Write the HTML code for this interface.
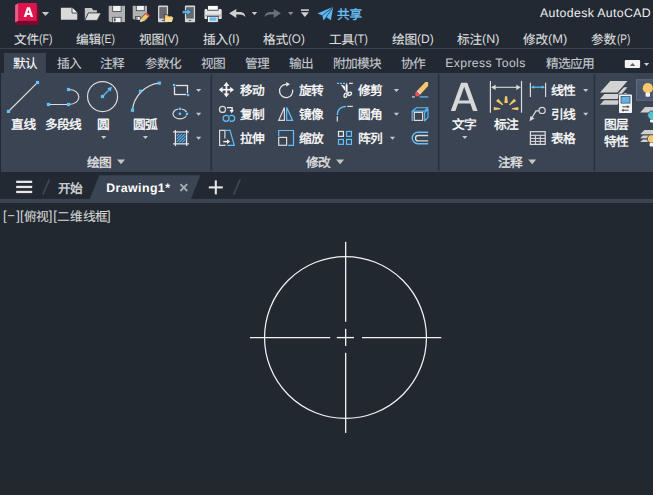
<!DOCTYPE html>
<html lang="zh-CN">
<head>
<meta charset="utf-8">
<title>Autodesk AutoCAD - Drawing1</title>
<style>
html,body{margin:0;padding:0;background:#212830;}
body{width:653px;height:495px;overflow:hidden;position:relative;font-family:"Liberation Sans",sans-serif;text-rendering:geometricPrecision;-webkit-font-smoothing:antialiased;}
#app{position:absolute;left:0;top:0;width:653px;height:495px;overflow:hidden;background:#212830;}
.abs{position:absolute;left:0;top:0;overflow:visible;}
#title,#menu,#tabs,#ftabs,#view{position:absolute;left:0;top:0;width:653px;height:0;}
#topbg{position:absolute;left:0;top:0;width:653px;height:199px;background:#222933;}
#sepline{position:absolute;left:0;top:47.5px;width:653px;height:1.3px;background:#3a4251;}
#activetab{position:absolute;left:4px;top:52.8px;width:42px;height:21px;background:#3b4453;}
#ribbon{position:absolute;left:1px;top:73px;width:652px;height:98.6px;background:#3b4453;}
.lbl{position:absolute;display:flex;align-items:baseline;white-space:nowrap;line-height:1;color:#e6e6e6;font-size:12px;}
.lbl svg,.vl svg{display:block;overflow:visible;fill:currentColor;stroke:currentColor;stroke-width:28;stroke-linejoin:round;flex:none;}
.lbl span{display:block;}
.apptitle{position:absolute;left:540.0px;top:6.0px;font-size:12.3px;line-height:15px;color:#f0f0f0;white-space:nowrap;letter-spacing:0.36px;}
.mi span{margin-left:0.4px;}
.xt{font-size:12.2px;letter-spacing:0.36px;}
.dw{font-size:12.3px;font-weight:bold;letter-spacing:0.45px;}
.vl{position:absolute;height:14px;width:120px;line-height:1;}
.vl span{position:absolute;top:0;display:block;}
.vl .b{font-size:13px;line-height:14px;top:-0.6px;}
.vl .c{top:0.3px;}
.vl svg{display:block;overflow:visible;fill:currentColor;stroke-width:8;}
.mi svg{stroke-width:10;}
.tab svg{stroke-width:8;}
svg.cjk text{font-family:"Liberation Sans","Noto Sans CJK SC",sans-serif;font-size:1000px;}
</style>
</head>
<body>
<div id="app">
<div id="topbg"></div>
<div id="title">
<svg class="abs" width="653" height="28" viewBox="0 0 653 28"><polygon points="15.1,5.1 18.6,3 18.6,20.9 15.1,22.6" fill="#ec5a88"/><polygon points="15.1,22.6 18.6,20.9 36.8,20.9 36.8,6.8 38.9,6.8 38.9,24.9 17.3,24.9" fill="#780a2c"/><rect x="18.6" y="3" width="18.2" height="17.9" fill="#e0134f"/><path d="M23.7 16.9 L27.0 7.3 H29.9 L33.2 16.9 H30.6 L30.0 14.9 H26.9 L26.3 16.9 Z M27.45 12.9 H29.45 L28.45 9.6 Z" fill="#fff" fill-rule="evenodd"/><polygon points="41.9,12 49.1,12 45.5,16.1" fill="#c8c8c8"/><polygon points="60.9,7.7 72.2,7.7 77.3,12.8 77.3,19.8 60.9,19.8" fill="#d9d9d9"/><polygon points="72.2,7.7 77.3,12.8 72.2,12.8" fill="#f6f6f6"/><path d="M72.0 7.7 V13.0 H77.3" stroke="#222933" stroke-width="0.8" fill="none"/><polygon points="84.8,8.0 91.7,8.0 93.3,10.3 96.9,10.3 96.9,13 88.3,13 84.8,20.4" fill="#c6c6c6"/><polygon points="88.4,12.9 101.1,12.9 97.2,20.4 84.8,20.4" fill="#dedede" stroke="#222933" stroke-width="0.8"/><path d="M108.7 5.6 H125 V22.3 H110.2 L108.7 20.8 Z" fill="#b2b2b2"/><rect x="112.7" y="5.2" width="8.4" height="6.3" fill="#f2f2f2" stroke="#3a4049" stroke-width="0.8"/><rect x="112.7" y="17.3" width="8.4" height="5.6" fill="#f2f2f2" stroke="#3a4049" stroke-width="0.8"/><rect x="108" y="22.35" width="18" height="1.2" fill="#222933"/><rect x="108" y="4" width="18" height="1.65" fill="#222933"/><rect x="113.8" y="18.3" width="1.9" height="3" fill="#555"/><path d="M132.7 5.6 H147 V19.8 H134.2 L132.7 18.3 Z" fill="#b2b2b2"/><rect x="136.3" y="5.2" width="8" height="5.5" fill="#f2f2f2" stroke="#3a4049" stroke-width="0.8"/><rect x="135.5" y="16.6" width="4.8" height="3.8" fill="#f2f2f2" stroke="#3a4049" stroke-width="0.8"/><rect x="132" y="19.85" width="9" height="1.4" fill="#222933"/><rect x="132" y="4" width="16" height="1.65" fill="#222933"/><rect x="136.3" y="17.4" width="1.3" height="2.4" fill="#555"/><polygon points="139.9,21.9 140.9,18.3 145.9,13.3 149.1,16.5 144.1,21.5" fill="#f6c86b" stroke="#222933" stroke-width="0.7"/><polygon points="145.3,13.9 146.7,12.5 149.9,15.7 148.5,17.1" fill="#e8505b"/><polygon points="139.9,21.9 140.7,19.0 142.9,21.2" fill="#eee"/><rect x="158" y="5.5" width="10.1" height="16.8" rx="1" fill="#d4d4d4"/><rect x="159.3" y="7.1" width="7.5" height="11.5" fill="#666a70"/><rect x="161.8" y="20" width="2.6" height="0.9" fill="#555"/><polygon points="164.4,14.7 167.6,14.7 168.4,16 172.4,16 172.4,17 173.3,17 171.8,22 164.4,22" fill="#f6c86b" stroke="#222933" stroke-width="0.7"/><polygon points="165.8,17.4 173.3,17.4 171.8,22 164.4,22" fill="#fbdc94"/><rect x="184.9" y="5.5" width="10.2" height="16.8" rx="1" fill="#d4d4d4"/><rect x="186.2" y="7.1" width="7.6" height="11.5" fill="#666a70"/><rect x="188.7" y="20" width="2.6" height="0.9" fill="#555"/><polygon points="182.3,10.7 187.0,10.7 187.0,8.7 191.7,12.05 187.0,15.4 187.0,13.4 182.3,13.4" fill="#5bb8f5" stroke="#222933" stroke-width="0.5"/><rect x="204.5" y="8.9" width="17.2" height="10.2" rx="1.2" fill="#e6e6e6"/><rect x="207.6" y="5.5" width="10.6" height="4.7" fill="#fafafa" stroke="#222933" stroke-width="0.8"/><rect x="204.5" y="14.6" width="17.2" height="1.9" fill="#b5b5b5"/><rect x="207.6" y="16.3" width="10.6" height="6" fill="#fafafa" stroke="#222933" stroke-width="0.8"/><rect x="209.4" y="17.3" width="7.2" height="3.6" fill="#6bbcf0"/><path transform="translate(229.1,8.7)" d="M0 4.6 L7.2 0.3 V3.2 H10.4 C14.4 3.2 16.4 5.3 16.2 8.6 C15.2 6.8 13.4 5.9 10.4 5.9 H7.2 V9.2 Z" fill="#d0d0d0"/><polygon points="251.8,12 257.2,12 254.5,15.2" fill="#c8c8c8"/><path transform="translate(280.9,8.7) scale(-1,1)" d="M0 4.6 L7.2 0.3 V3.2 H10.4 C14.4 3.2 16.4 5.3 16.2 8.6 C15.2 6.8 13.4 5.9 10.4 5.9 H7.2 V9.2 Z" fill="#6a707a"/><polygon points="287.95,12 293.35,12 290.65,15.2" fill="#8b8f96"/><rect x="300.9" y="9.3" width="8" height="1.6" fill="#d0d0d0"/><polygon points="300.9,12.3 308.9,12.3 304.9,17" fill="#d0d0d0"/><path d="M333.2 6.8 L317.4 13.5 L322.4 15.5 L323.4 20.5 L326.3 17.1 L330.9 20.3 Z" fill="#5bb8f5"/><path d="M333.2 6.8 L322.4 15.5 M333.2 6.8 L326.3 17.1" stroke="#222933" stroke-width="0.7" fill="none"/></svg>
<div class="lbl " style="left:337.3px;top:8.3px;color:#6cc0f5;"><svg class="cjk" role="img" aria-label="共享" width="24.80" height="10.91" viewBox="0 -880 2000 880"><text x="0 1000" y="0">共享</text></svg></div>
<div class="apptitle">Autodesk AutoCAD</div>
</div>
<div id="menu">
<div class="lbl mi" style="left:13.7px;top:32.5px;color:#dedede;"><svg class="cjk" role="img" aria-label="文件" width="24.80" height="10.91" viewBox="0 -880 2000 880"><text x="0 1000" y="0">文件</text></svg><span style="font-size:12.4px;transform:scaleX(0.852);transform-origin:0 50%;">(F)</span></div>
<div class="lbl mi" style="left:75.9px;top:32.5px;color:#dedede;"><svg class="cjk" role="img" aria-label="编辑" width="24.80" height="10.91" viewBox="0 -880 2000 880"><text x="0 1000" y="0">编辑</text></svg><span style="font-size:12.4px;transform:scaleX(0.847);transform-origin:0 50%;">(E)</span></div>
<div class="lbl mi" style="left:138.6px;top:32.5px;color:#dedede;"><svg class="cjk" role="img" aria-label="视图" width="24.80" height="10.91" viewBox="0 -880 2000 880"><text x="0 1000" y="0">视图</text></svg><span style="font-size:12.4px;transform:scaleX(0.889);transform-origin:0 50%;">(V)</span></div>
<div class="lbl mi" style="left:202.5px;top:32.5px;color:#dedede;"><svg class="cjk" role="img" aria-label="插入" width="24.80" height="10.91" viewBox="0 -880 2000 880"><text x="0 1000" y="0">插入</text></svg><span style="font-size:12.4px;transform:scaleX(0.999);transform-origin:0 50%;">(I)</span></div>
<div class="lbl mi" style="left:263.1px;top:32.5px;color:#dedede;"><svg class="cjk" role="img" aria-label="格式" width="24.80" height="10.91" viewBox="0 -880 2000 880"><text x="0 1000" y="0">格式</text></svg><span style="font-size:12.4px;transform:scaleX(0.938);transform-origin:0 50%;">(O)</span></div>
<div class="lbl mi" style="left:329px;top:32.5px;color:#dedede;"><svg class="cjk" role="img" aria-label="工具" width="24.80" height="10.91" viewBox="0 -880 2000 880"><text x="0 1000" y="0">工具</text></svg><span style="font-size:12.4px;transform:scaleX(0.877);transform-origin:0 50%;">(T)</span></div>
<div class="lbl mi" style="left:391.5px;top:32.5px;color:#dedede;"><svg class="cjk" role="img" aria-label="绘图" width="24.80" height="10.91" viewBox="0 -880 2000 880"><text x="0 1000" y="0">绘图</text></svg><span style="font-size:12.4px;transform:scaleX(0.969);transform-origin:0 50%;">(D)</span></div>
<div class="lbl mi" style="left:456.5px;top:32.5px;color:#dedede;"><svg class="cjk" role="img" aria-label="标注" width="24.80" height="10.91" viewBox="0 -880 2000 880"><text x="0 1000" y="0">标注</text></svg><span style="font-size:12.4px;transform:scaleX(1.01);transform-origin:0 50%;">(N)</span></div>
<div class="lbl mi" style="left:523px;top:32.5px;color:#dedede;"><svg class="cjk" role="img" aria-label="修改" width="24.80" height="10.91" viewBox="0 -880 2000 880"><text x="0 1000" y="0">修改</text></svg><span style="font-size:12.4px;transform:scaleX(1.038);transform-origin:0 50%;">(M)</span></div>
<div class="lbl mi" style="left:591.4px;top:32.5px;color:#dedede;"><svg class="cjk" role="img" aria-label="参数" width="24.80" height="10.91" viewBox="0 -880 2000 880"><text x="0 1000" y="0">参数</text></svg><span style="font-size:12.4px;transform:scaleX(0.81);transform-origin:0 50%;">(P)</span></div>
</div>
<div id="sepline"></div>
<div id="tabs">
<div id="activetab"></div>
<div class="lbl tab" style="left:12.9px;top:57.1px;color:#ffffff;"><svg class="cjk" role="img" aria-label="默认" width="24.40" height="10.91" viewBox="0 -880 1967.7 880"><text x="0 967.7" y="0">默认</text></svg></div>
<div class="lbl tab" style="left:56.5px;top:57.1px;color:#c6cad0;"><svg class="cjk" role="img" aria-label="插入" width="24.40" height="10.91" viewBox="0 -880 1967.7 880"><text x="0 967.7" y="0">插入</text></svg></div>
<div class="lbl tab" style="left:100.3px;top:57.1px;color:#c6cad0;"><svg class="cjk" role="img" aria-label="注释" width="24.40" height="10.91" viewBox="0 -880 1967.7 880"><text x="0 967.7" y="0">注释</text></svg></div>
<div class="lbl tab" style="left:145.4px;top:57.1px;color:#c6cad0;"><svg class="cjk" role="img" aria-label="参数化" width="36.40" height="10.91" viewBox="0 -880 2935.5 880"><text x="0 967.7 1935.5" y="0">参数化</text></svg></div>
<div class="lbl tab" style="left:200.7px;top:57.1px;color:#c6cad0;"><svg class="cjk" role="img" aria-label="视图" width="24.40" height="10.91" viewBox="0 -880 1967.7 880"><text x="0 967.7" y="0">视图</text></svg></div>
<div class="lbl tab" style="left:244.8px;top:57.1px;color:#c6cad0;"><svg class="cjk" role="img" aria-label="管理" width="24.40" height="10.91" viewBox="0 -880 1967.7 880"><text x="0 967.7" y="0">管理</text></svg></div>
<div class="lbl tab" style="left:288.6px;top:57.1px;color:#c6cad0;"><svg class="cjk" role="img" aria-label="输出" width="24.40" height="10.91" viewBox="0 -880 1967.7 880"><text x="0 967.7" y="0">输出</text></svg></div>
<div class="lbl tab" style="left:333.1px;top:57.1px;color:#c6cad0;"><svg class="cjk" role="img" aria-label="附加模块" width="48.40" height="10.91" viewBox="0 -880 3903.2 880"><text x="0 967.7 1935.5 2903.2" y="0">附加模块</text></svg></div>
<div class="lbl tab" style="left:400.7px;top:57.1px;color:#c6cad0;"><svg class="cjk" role="img" aria-label="协作" width="24.40" height="10.91" viewBox="0 -880 1967.7 880"><text x="0 967.7" y="0">协作</text></svg></div>
<div class="lbl tab" style="left:545.6px;top:57.1px;color:#c6cad0;"><svg class="cjk" role="img" aria-label="精选应用" width="48.40" height="10.91" viewBox="0 -880 3903.2 880"><text x="0 967.7 1935.5 2903.2" y="0">精选应用</text></svg></div>
<div class="lbl tab" style="left:445.3px;top:57.2px;color:#c6cad0"><span class="xt">Express Tools</span></div>
<svg class="abs" style="left:620px;top:56px" width="33" height="16" viewBox="620 56 33 16"><rect x="624.8" y="60.1" width="15.3" height="7.8" rx="0.8" fill="#f2f2f2"/><polygon points="629.9,66.0 635.3,66.0 632.6,62.9" fill="#5c5c5c"/><polygon points="644,63 649.2,63 646.6,66" fill="#d0d0d0"/></svg>
</div>
<div id="ribbon"></div>
<svg class="abs" style="left:0;top:73px" width="653" height="99" viewBox="0 73 653 99"><rect x="210.55" y="74.5" width="1.5" height="96.5" fill="#2a303b"/><rect x="437.95" y="74.5" width="1.5" height="96.5" fill="#2a303b"/><rect x="593.65" y="74.5" width="1.5" height="96.5" fill="#2a303b"/><line x1="9.6" y1="110.3" x2="36.4" y2="83.6" stroke="#dadada" stroke-width="1.2" /><rect x="6.9" y="109.8" width="3.2" height="3.2" fill="#5fc0fb"/><rect x="35.9" y="80.9" width="3.2" height="3.2" fill="#5fc0fb"/><path d="M48.5 104.5 H68.5 M68.5 89.5 C82.3 89.5 82.3 104.5 68.5 104.5" stroke="#dadada" stroke-width="1.2" fill="none" /><rect x="46.9" y="102.9" width="3.2" height="3.2" fill="#5fc0fb"/><rect x="66.9" y="102.9" width="3.2" height="3.2" fill="#5fc0fb"/><rect x="66.9" y="87.9" width="3.2" height="3.2" fill="#5fc0fb"/><circle cx="102.55" cy="96.55" r="15.0" stroke="#dadada" stroke-width="1.2" fill="none"/><line x1="103.5" y1="95.5" x2="110" y2="88.9" stroke="#5fc0fb" stroke-width="1.15" /><polygon points="112.0,86.8 107.2,88.3 108.9,89.8 110.6,91.7" fill="#5fc0fb"/><rect x="100.9" y="94.9" width="3.2" height="3.2" fill="#5fc0fb"/><path d="M132.5 110.2 C133.5 96 146 84.2 159.3 83.1" stroke="#dadada" stroke-width="1.2" fill="none" /><rect x="130.9" y="108.6" width="3.2" height="3.2" fill="#5fc0fb"/><rect x="138.9" y="89.7" width="3.2" height="3.2" fill="#5fc0fb"/><rect x="157.7" y="81.5" width="3.2" height="3.2" fill="#5fc0fb"/><polygon points="101.1,135.9 106.3,135.9 103.7,138.9" fill="#c6c6c6"/><polygon points="142.8,135.9 148,135.9 145.4,138.9" fill="#c6c6c6"/><rect x="174.5" y="85.5" width="13" height="9" stroke="#e4e4e4" stroke-width="1.3" fill="none"/><rect x="172.25" y="83.25" width="3.6" height="3.6" fill="#333c4a"/><rect x="172.8" y="83.8" width="2.5" height="2.5" fill="#5fc0fb"/><rect x="186.2" y="93.2" width="3.6" height="3.6" fill="#333c4a"/><rect x="186.75" y="93.75" width="2.5" height="2.5" fill="#5fc0fb"/><polygon points="196,89 201.2,89 198.6,92" fill="#c6c6c6"/><ellipse cx="179.95" cy="113.85" rx="6.95" ry="5.0" stroke="#dadada" stroke-width="1.2" fill="none"/><rect x="178.1" y="107.1" width="3.6" height="3.6" fill="#333c4a"/><rect x="178.65" y="107.65" width="2.5" height="2.5" fill="#5fc0fb"/><rect x="178.1" y="112" width="3.6" height="3.6" fill="#333c4a"/><rect x="178.65" y="112.55" width="2.5" height="2.5" fill="#5fc0fb"/><rect x="185.2" y="112" width="3.6" height="3.6" fill="#333c4a"/><rect x="185.75" y="112.55" width="2.5" height="2.5" fill="#5fc0fb"/><polygon points="196,112.7 201.2,112.7 198.6,115.7" fill="#c6c6c6"/><clipPath id="hc"><rect x="176.8" y="133.7" width="8.9" height="8.7"/></clipPath><rect x="176.8" y="133.7" width="8.9" height="8.7" fill="#2c394c"/><g clip-path="url(#hc)" stroke="#5cb4f4" stroke-width="1.25"><line x1="166.3" y1="143.5" x2="177.3" y2="132.5"/><line x1="169.3" y1="143.5" x2="180.3" y2="132.5"/><line x1="172.3" y1="143.5" x2="183.3" y2="132.5"/><line x1="175.3" y1="143.5" x2="186.3" y2="132.5"/><line x1="178.3" y1="143.5" x2="189.3" y2="132.5"/><line x1="181.3" y1="143.5" x2="192.3" y2="132.5"/><line x1="184.3" y1="143.5" x2="195.3" y2="132.5"/></g><line x1="175.45" y1="130" x2="175.45" y2="145.9" stroke="#e6e6e6" stroke-width="1.25" /><line x1="186.6" y1="130" x2="186.6" y2="145.9" stroke="#e6e6e6" stroke-width="1.25" /><line x1="173.1" y1="131.95" x2="188.9" y2="131.95" stroke="#e6e6e6" stroke-width="1.25" /><line x1="173.1" y1="143.85" x2="188.9" y2="143.85" stroke="#e6e6e6" stroke-width="1.25" /><polygon points="196,136.7 201.2,136.7 198.6,139.7" fill="#c6c6c6"/><polygon points="117,159.6 125,159.6 121,164.2" fill="#c6c6c6"/><polygon points="336.1,159.6 344.1,159.6 340.1,164.2" fill="#c6c6c6"/><polygon points="528.2,159.6 536.2,159.6 532.2,164.2" fill="#c6c6c6"/><line x1="221.4" y1="89.7" x2="231.4" y2="89.7" stroke="#f6f6f6" stroke-width="1.7" /><line x1="226.4" y1="84.7" x2="226.4" y2="94.7" stroke="#f6f6f6" stroke-width="1.7" /><polygon points="234,89.7 230.2,92.7 230.2,86.7" fill="#f6f6f6"/><polygon points="218.8,89.7 222.6,86.7 222.6,92.7" fill="#f6f6f6"/><polygon points="226.4,97.3 223.4,93.5 229.4,93.5" fill="#f6f6f6"/><polygon points="226.4,82.1 229.4,85.9 223.4,85.9" fill="#f6f6f6"/><circle cx="222.5" cy="109.45" r="3.05" stroke="#dadada" stroke-width="1.25" fill="none"/><path d="M227.0 107.6 H232.1 V110.6" stroke="#f2f2f2" stroke-width="1.4" fill="none" /><polygon points="229.5,110.1 233.9,110.1 231.7,113.2" fill="#f2f2f2"/><circle cx="231.7" cy="118.35" r="3.0" stroke="#5fc0fb" stroke-width="1.2" fill="none"/><circle cx="226.1" cy="118.35" r="3.0" stroke="#3b4453" stroke-width="2.6" fill="#3b4453"/><circle cx="226.1" cy="118.35" r="3.0" stroke="#5fc0fb" stroke-width="1.2" fill="none"/><path d="M224.9 138.6 V130.4 H219.6 V145.3 H224.9 V144.4" stroke="#dadada" stroke-width="1.2" fill="none" /><path d="M224.9 130.4 H230 L234.3 145.3 H227.3" stroke="#5fc0fb" stroke-width="1.2" fill="none" /><line x1="223.2" y1="141.6" x2="227.6" y2="141.6" stroke="#f0f0f0" stroke-width="1.4" /><polygon points="230.1,141.6 227,139.3 227,143.9" fill="#f0f0f0"/><path d="M286.3 84.4 A6.6 6.6 0 1 0 292.6 89.6" stroke="#e6e6e6" stroke-width="1.3" fill="none" /><polygon points="290.0,84.3 286.2,82.0 286.2,86.6" fill="#ececec"/><path d="M278.7 120.4 L284.4 107.6 V120.4 Z" stroke="#dadada" stroke-width="1.2" fill="none" /><path d="M286.7 120.4 V107.6 L292.6 120.4 Z" stroke="#5fc0fb" stroke-width="1.2" fill="none" /><path d="M278.7 136.0 V130.5 H293.5 V145.3 H288.3" stroke="#5fc0fb" stroke-width="1.2" fill="none" /><rect x="278.7" y="137.4" width="7.9" height="7.9" stroke="#dadada" stroke-width="1.2" fill="none"/><line x1="336.9" y1="83.4" x2="345.1" y2="83.4" stroke="#5fc0fb" stroke-width="1.3" stroke-dasharray="2.1 0.9"/><line x1="349" y1="83.4" x2="352.9" y2="83.4" stroke="#dadada" stroke-width="1.3" /><polygon points="340.6,84.6 344.2,85.7 348.9,92.2 347.0,93.6" fill="#f6f6f6"/><polygon points="346.3,82.3 347.9,85.2 347.9,91.9 345.5,92.5 345.4,85.2" fill="#f6f6f6" stroke="#3b4453" stroke-width="0.5"/><ellipse cx="345.5" cy="95.4" rx="1.45" ry="2.0" transform="rotate(18 345.5 95.4)" stroke="#f6f6f6" stroke-width="1.3" fill="none"/><ellipse cx="349.7" cy="93.8" rx="2.0" ry="1.5" transform="rotate(-28 349.7 93.8)" stroke="#f6f6f6" stroke-width="1.3" fill="none"/><path d="M337.3 114.9 C337.3 110 340.6 106.4 345.8 106.4" stroke="#5fc0fb" stroke-width="1.5" fill="none" /><line x1="347.3" y1="106.4" x2="352.9" y2="106.4" stroke="#dadada" stroke-width="1.25" /><line x1="337.3" y1="116.3" x2="337.3" y2="121.6" stroke="#dadada" stroke-width="1.25" /><rect x="338.5" y="131.45" width="4.9" height="4.9" stroke="#e6e6e6" stroke-width="1.2" fill="none"/><rect x="346.55" y="131.45" width="4.9" height="4.9" stroke="#5fc0fb" stroke-width="1.2" fill="none"/><rect x="338.5" y="139.45" width="4.9" height="4.9" stroke="#5fc0fb" stroke-width="1.2" fill="none"/><rect x="346.55" y="139.45" width="4.9" height="4.9" stroke="#5fc0fb" stroke-width="1.2" fill="none"/><polygon points="393.8,88.9 399,88.9 396.4,91.9" fill="#c6c6c6"/><polygon points="393.8,112.7 399,112.7 396.4,115.7" fill="#c6c6c6"/><polygon points="389.9,136.7 395.1,136.7 392.5,139.7" fill="#c6c6c6"/><polygon points="425.4,82.0 428.1,82.0 428.1,85.9 421.2,93.4 417.6,90.2" fill="#f6c86b"/><polygon points="417.6,90.2 421.2,93.4 420.2,94.5 416.6,91.3" fill="#f6f6f6"/><polygon points="416.6,91.3 420.2,94.5 419.0,96.0 416.6,96.5 415.1,95.3 415.3,92.8" fill="#e8505b"/><line x1="412" y1="96.9" x2="414.9" y2="96.9" stroke="#dadada" stroke-width="1.2" /><line x1="419.6" y1="96.9" x2="428.2" y2="96.9" stroke="#5fc0fb" stroke-width="1.2" /><rect x="414.3" y="112.4" width="8.3" height="8.0" stroke="#dadada" stroke-width="1.2" fill="none"/><polygon points="412.2,111.1 416.5,107.7 428,107.7 424.4,111.1" stroke="#5fc0fb" stroke-width="1.1" fill="none" stroke-linejoin="round"/><polygon points="424.7,112.6 428,109.3 428,117.3 424.7,120.9" stroke="#5fc0fb" stroke-width="1.1" fill="none" stroke-linejoin="round"/><line x1="412.2" y1="111.1" x2="412.2" y2="121" stroke="#5fc0fb" stroke-width="1.1" /><path d="M428.2 132.3 H418 A5.75 5.75 0 0 0 418 143.8 H428.2" stroke="#5fc0fb" stroke-width="1.4" fill="none" /><path d="M428.2 135.5 H418.2 A2.7 2.7 0 0 0 418.2 140.9 H428.2" stroke="#dadada" stroke-width="1.4" fill="none" /><path d="M450.8 111 L461.1 82.7 H467.3 L477.6 111 H473 L470.3 103.6 H458.1 L455.4 111 Z M459.3 100.4 H469.1 L464.2 86.8 Z" fill="#d8d8d8" fill-rule="evenodd"/><polygon points="462.2,135.9 467.4,135.9 464.8,138.9" fill="#c6c6c6"/><line x1="490.4" y1="80.9" x2="490.4" y2="112.7" stroke="#dadada" stroke-width="1.2" /><line x1="521.5" y1="80.9" x2="521.5" y2="112.7" stroke="#dadada" stroke-width="1.2" /><line x1="493" y1="87.3" x2="519" y2="87.3" stroke="#dadada" stroke-width="1.1" /><polygon points="491.0,87.3 495.6,84.7 495.6,89.9" fill="#dadada"/><polygon points="520.9,87.3 516.3,84.7 516.3,89.9" fill="#dadada"/><g fill="#f6c86b"><polygon points="505.0,96.3 507.2,96.3 507.8,103 504.4,103"/><polygon points="496.0,101.1 498.2,98.8 503.2,104.4 502.3,105.3"/><polygon points="516.2,101.1 514.0,98.8 509.0,104.4 509.9,105.3"/><polygon points="493.8,107.1 493.8,110.2 500.4,109.3 500.4,108.2"/><polygon points="518.4,107.1 518.4,110.2 511.8,109.3 511.8,108.2"/></g><line x1="530.4" y1="82.7" x2="530.4" y2="97" stroke="#dadada" stroke-width="1.2" /><line x1="545.6" y1="82.7" x2="545.6" y2="97" stroke="#dadada" stroke-width="1.2" /><line x1="532" y1="87.2" x2="544" y2="87.2" stroke="#5fc0fb" stroke-width="1.3" /><polygon points="531,87.2 534.2,85.6 534.2,88.8" fill="#5fc0fb"/><polygon points="545,87.2 541.8,85.6 541.8,88.8" fill="#5fc0fb"/><circle cx="542.1" cy="110.4" r="3.1" stroke="#dadada" stroke-width="1.2" fill="none"/><path d="M539 110.9 H536 L531.6 118.3" stroke="#dadada" stroke-width="1.2" fill="none" /><polygon points="529.6,121.2 530.4,115.9 534.5,118.4" fill="#dadada"/><rect x="530.4" y="131.7" width="14.8" height="12.7" stroke="#dadada" stroke-width="1.25" fill="none"/><line x1="530.4" y1="135.3" x2="545.2" y2="135.3" stroke="#dadada" stroke-width="1.15" /><line x1="530.4" y1="138.4" x2="545.2" y2="138.4" stroke="#dadada" stroke-width="1.05" /><line x1="530.4" y1="141.4" x2="545.2" y2="141.4" stroke="#dadada" stroke-width="1.05" /><line x1="535.4" y1="135.3" x2="535.4" y2="144.4" stroke="#dadada" stroke-width="1.05" /><line x1="540.3" y1="135.3" x2="540.3" y2="144.4" stroke="#dadada" stroke-width="1.05" /><polygon points="583.1,88.9 588.3,88.9 585.7,91.9" fill="#c6c6c6"/><polygon points="583.1,112.8 588.3,112.8 585.7,115.8" fill="#c6c6c6"/><polygon points="600,104.7 610.3,93.1 627.5,93.1 617.4,104.7" fill="#cdcdcd"/><polygon points="599.4,100.3 609.7,88.7 628.1,88.7 618,100.3" fill="#3b4453"/><polygon points="600,98.9 610.3,87.3 627.5,87.3 617.4,98.9" fill="#d3d3d3"/><polygon points="599.4,94 609.7,82.4 628.1,82.4 618,94" fill="#3b4453"/><polygon points="600,92.6 610.3,81 627.5,81 617.4,92.6" fill="#d3d3d3"/><rect x="618.3" y="93.8" width="14.4" height="19.9" rx="1" fill="#3b4453"/><rect x="619" y="94.5" width="13" height="18.5" rx="0.8" fill="#f2f2f2"/><rect x="621" y="96.4" width="9" height="6.7" fill="#5fb4f0" stroke="#444" stroke-width="0.7"/><line x1="622.4" y1="106.8" x2="628.4" y2="106.8" stroke="#444" stroke-width="1" /><line x1="622.6" y1="110.2" x2="628.6" y2="110.2" stroke="#444" stroke-width="1" /><polygon points="629.6,106.8 627.4,105.3 627.4,108.3" fill="#444"/><polygon points="621.4,110.2 623.6,108.7 623.6,111.7" fill="#444"/><rect x="636.6" y="79.8" width="20" height="20.4" fill="#4d586c" stroke="#65718a" stroke-width="0.9"/><circle cx="647.8" cy="88.2" r="5.1" fill="#f6c86b"/><rect x="645.6" y="92.6" width="4.4" height="4.2" rx="1" fill="#f4f4f4"/><polygon points="640.2,112.6 645,107.1 656,107.1 656,112.6" fill="#cfcfcf"/><circle cx="652" cy="115.3" r="4.3" fill="#4fc4cf" stroke="#3b4453" stroke-width="0.8"/><rect x="650" y="119.4" width="4" height="3" rx="0.8" fill="#f4f4f4"/><polygon points="640.2,134.2 644.4,129.9 656,129.9 656,134.2" fill="#cfcfcf"/><polygon points="640.2,138.2 642.8,135.6 656,135.6 656,138.2" fill="#cfcfcf"/><polygon points="640.2,142 642.8,139.6 656,139.6 656,142" fill="#cfcfcf"/><circle cx="651.6" cy="138.9" r="4.3" fill="#f6c86b" stroke="#3b4453" stroke-width="0.8"/><rect x="649.6" y="143" width="4" height="3.4" rx="0.8" fill="#f4f4f4"/></svg>
<div class="lbl rl" style="left:10.7px;top:118.2px;color:#ffffff;"><svg class="cjk" role="img" aria-label="直线" width="24.80" height="10.91" viewBox="0 -880 2000 880"><text x="0 1000" y="0">直线</text></svg></div>
<div class="lbl rl" style="left:45.2px;top:118.2px;color:#ffffff;"><svg class="cjk" role="img" aria-label="多段线" width="36.40" height="10.91" viewBox="0 -880 2935.5 880"><text x="0 967.7 1935.5" y="0">多段线</text></svg></div>
<div class="lbl rl" style="left:97.3px;top:118.2px;color:#ffffff;"><svg class="cjk" role="img" aria-label="圆" width="12.40" height="10.91" viewBox="0 -880 1000 880"><text x="0" y="0">圆</text></svg></div>
<div class="lbl rl" style="left:133.3px;top:118.2px;color:#ffffff;"><svg class="cjk" role="img" aria-label="圆弧" width="24.40" height="10.91" viewBox="0 -880 1967.7 880"><text x="0 967.7" y="0">圆弧</text></svg></div>
<div class="lbl rl" style="left:86.6px;top:156.4px;color:#e2e2e2;"><svg class="cjk" role="img" aria-label="绘图" width="24.40" height="10.91" viewBox="0 -880 1967.7 880"><text x="0 967.7" y="0">绘图</text></svg></div>
<div class="lbl rl" style="left:240px;top:84.2px;color:#ffffff;"><svg class="cjk" role="img" aria-label="移动" width="24.40" height="10.91" viewBox="0 -880 1967.7 880"><text x="0 967.7" y="0">移动</text></svg></div>
<div class="lbl rl" style="left:240px;top:108.2px;color:#ffffff;"><svg class="cjk" role="img" aria-label="复制" width="24.40" height="10.91" viewBox="0 -880 1967.7 880"><text x="0 967.7" y="0">复制</text></svg></div>
<div class="lbl rl" style="left:240px;top:132.2px;color:#ffffff;"><svg class="cjk" role="img" aria-label="拉伸" width="24.40" height="10.91" viewBox="0 -880 1967.7 880"><text x="0 967.7" y="0">拉伸</text></svg></div>
<div class="lbl rl" style="left:298.8px;top:84.2px;color:#ffffff;"><svg class="cjk" role="img" aria-label="旋转" width="24.40" height="10.91" viewBox="0 -880 1967.7 880"><text x="0 967.7" y="0">旋转</text></svg></div>
<div class="lbl rl" style="left:298.8px;top:108.2px;color:#ffffff;"><svg class="cjk" role="img" aria-label="镜像" width="24.40" height="10.91" viewBox="0 -880 1967.7 880"><text x="0 967.7" y="0">镜像</text></svg></div>
<div class="lbl rl" style="left:298.8px;top:132.2px;color:#ffffff;"><svg class="cjk" role="img" aria-label="缩放" width="24.40" height="10.91" viewBox="0 -880 1967.7 880"><text x="0 967.7" y="0">缩放</text></svg></div>
<div class="lbl rl" style="left:358.3px;top:84.2px;color:#ffffff;"><svg class="cjk" role="img" aria-label="修剪" width="24.40" height="10.91" viewBox="0 -880 1967.7 880"><text x="0 967.7" y="0">修剪</text></svg></div>
<div class="lbl rl" style="left:358.3px;top:108.2px;color:#ffffff;"><svg class="cjk" role="img" aria-label="圆角" width="24.40" height="10.91" viewBox="0 -880 1967.7 880"><text x="0 967.7" y="0">圆角</text></svg></div>
<div class="lbl rl" style="left:358px;top:132.2px;color:#ffffff;"><svg class="cjk" role="img" aria-label="阵列" width="24.40" height="10.91" viewBox="0 -880 1967.7 880"><text x="0 967.7" y="0">阵列</text></svg></div>
<div class="lbl rl" style="left:550.6px;top:84.2px;color:#ffffff;"><svg class="cjk" role="img" aria-label="线性" width="24.40" height="10.91" viewBox="0 -880 1967.7 880"><text x="0 967.7" y="0">线性</text></svg></div>
<div class="lbl rl" style="left:550.6px;top:108.2px;color:#ffffff;"><svg class="cjk" role="img" aria-label="引线" width="24.40" height="10.91" viewBox="0 -880 1967.7 880"><text x="0 967.7" y="0">引线</text></svg></div>
<div class="lbl rl" style="left:550.6px;top:132.2px;color:#ffffff;"><svg class="cjk" role="img" aria-label="表格" width="24.40" height="10.91" viewBox="0 -880 1967.7 880"><text x="0 967.7" y="0">表格</text></svg></div>
<div class="lbl rl" style="left:306.4px;top:156.4px;color:#e2e2e2;"><svg class="cjk" role="img" aria-label="修改" width="24.40" height="10.91" viewBox="0 -880 1967.7 880"><text x="0 967.7" y="0">修改</text></svg></div>
<div class="lbl rl" style="left:451.9px;top:118.2px;color:#ffffff;"><svg class="cjk" role="img" aria-label="文字" width="24.40" height="10.91" viewBox="0 -880 1967.7 880"><text x="0 967.7" y="0">文字</text></svg></div>
<div class="lbl rl" style="left:494.2px;top:118.2px;color:#ffffff;"><svg class="cjk" role="img" aria-label="标注" width="24.40" height="10.91" viewBox="0 -880 1967.7 880"><text x="0 967.7" y="0">标注</text></svg></div>
<div class="lbl rl" style="left:498px;top:156.4px;color:#e2e2e2;"><svg class="cjk" role="img" aria-label="注释" width="24.40" height="10.91" viewBox="0 -880 1967.7 880"><text x="0 967.7" y="0">注释</text></svg></div>
<div class="lbl rl" style="left:604px;top:118.4px;color:#ffffff;"><svg class="cjk" role="img" aria-label="图层" width="24.40" height="10.91" viewBox="0 -880 1967.7 880"><text x="0 967.7" y="0">图层</text></svg></div>
<div class="lbl rl" style="left:604px;top:135.4px;color:#ffffff;"><svg class="cjk" role="img" aria-label="特性" width="24.40" height="10.91" viewBox="0 -880 1967.7 880"><text x="0 967.7" y="0">特性</text></svg></div>
<div id="ftabs">
<svg class="abs" width="653" height="32" style="left:0;top:171px" viewBox="0 171 653 32"><rect x="0" y="198.9" width="653" height="4.1" fill="#3b4453"/><polygon points="89.7,199 99.3,175.2 200.4,175.2 190.9,199" fill="#3b4453"/><rect x="16.2" y="180.7" width="16" height="2.3" fill="#e6e6e6"/><rect x="16.2" y="185.8" width="16" height="2.3" fill="#e6e6e6"/><rect x="16.2" y="190.8" width="16" height="2.3" fill="#e6e6e6"/><line x1="42.8" y1="194.6" x2="49.4" y2="179.4" stroke="#434b5a" stroke-width="1.4" /><line x1="233.6" y1="194.6" x2="240.2" y2="179.4" stroke="#434b5a" stroke-width="1.4" /><line x1="180.4" y1="184.2" x2="187.2" y2="191" stroke="#a4a9b1" stroke-width="1.9" /><line x1="187.2" y1="184.2" x2="180.4" y2="191" stroke="#a4a9b1" stroke-width="1.9" /><line x1="208.8" y1="187.4" x2="222.8" y2="187.4" stroke="#e6e6e6" stroke-width="2.1" /><line x1="215.8" y1="180.4" x2="215.8" y2="194.4" stroke="#e6e6e6" stroke-width="2.1" /></svg>
<div class="lbl rl" style="left:58.1px;top:181.9px;color:#dcdcdc;"><svg class="cjk" role="img" aria-label="开始" width="24.40" height="10.91" viewBox="0 -880 1967.7 880"><text x="0 967.7" y="0">开始</text></svg></div>
<div class="lbl" style="left:106.2px;top:181.6px;color:#fff"><span class="dw">Drawing1*</span></div>
</div>
<div id="view">
<div class="vl" style="left:0;top:209.9px;color:#d6d6d6"><span class="b" style="left:3px">[</span><span class="b" style="left:7.3px">&#8722;</span><span class="b" style="left:16.3px">]</span><span class="b" style="left:20.1px">[</span><span class="c" style="left:23.9px"><svg class="cjk" role="img" aria-label="俯" width="12.70" height="11.18" viewBox="0 -880 1000 880"><text x="0" y="0">俯</text></svg></span><span class="c" style="left:36.3px"><svg class="cjk" role="img" aria-label="视" width="12.70" height="11.18" viewBox="0 -880 1000 880"><text x="0" y="0">视</text></svg></span><span class="b" style="left:48.8px">]</span><span class="b" style="left:53.2px">[</span><span class="c" style="left:56.7px"><svg class="cjk" role="img" aria-label="二" width="12.70" height="11.18" viewBox="0 -880 1000 880"><text x="0" y="0">二</text></svg></span><span class="c" style="left:70.2px"><svg class="cjk" role="img" aria-label="维" width="12.70" height="11.18" viewBox="0 -880 1000 880"><text x="0" y="0">维</text></svg></span><span class="c" style="left:83.1px"><svg class="cjk" role="img" aria-label="线" width="12.70" height="11.18" viewBox="0 -880 1000 880"><text x="0" y="0">线</text></svg></span><span class="c" style="left:95.4px"><svg class="cjk" role="img" aria-label="框" width="12.70" height="11.18" viewBox="0 -880 1000 880"><text x="0" y="0">框</text></svg></span><span class="b" style="left:107px">]</span></div>
<svg class="abs" style="left:0;top:203px" width="653" height="292" viewBox="0 203 653 292"><circle cx="345.5" cy="337.5" r="80.95" fill="none" stroke="#f2f2f2" stroke-width="1.25"/><g stroke="#f2f2f2" stroke-width="1.35"><line x1="345.65" y1="241.8" x2="345.65" y2="321.8"/><line x1="345.65" y1="352.8" x2="345.65" y2="432.9"/><line x1="249.9" y1="337.6" x2="330.2" y2="337.6"/><line x1="362" y1="337.6" x2="441.3" y2="337.6"/><line x1="336.8" y1="337.6" x2="354" y2="337.6"/><line x1="345.65" y1="328.8" x2="345.65" y2="346"/></g></svg>
</div>
</div>
</body>
</html>
